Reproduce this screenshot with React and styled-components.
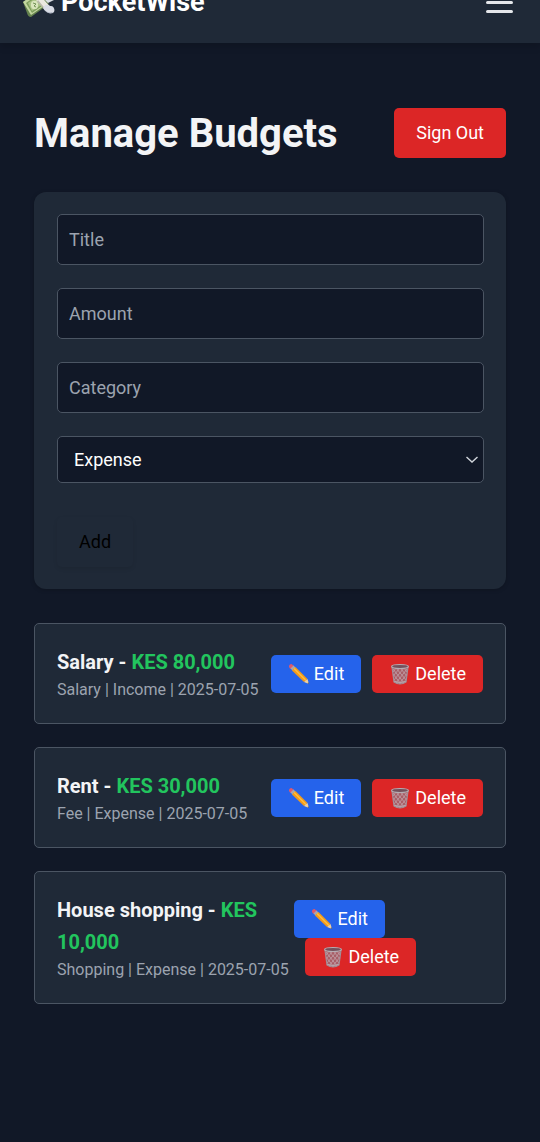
import React from "react";
import styled, { createGlobalStyle, css } from "styled-components";

const GlobalStyle = createGlobalStyle`
  *, *::before, *::after { box-sizing: border-box; }
  body {
    margin: 0;
    background: #111827;
    color: #f3f4f6;
    font-family: Roboto, "Liberation Sans", sans-serif;
    font-size: 18px;
    line-height: 27px;
  }
  button, input, select { font: inherit; }
  h1, h2, p, ul { margin: 0; padding: 0; }
`;

const Page = styled.div`
  min-height: 100vh;
  overflow: hidden;
`;

const Header = styled.header`
  display: flex;
  align-items: center;
  justify-content: space-between;
  margin-top: -39px;
  padding: 23px;
  background: #1f2937;
  box-shadow: 0 4px 7px rgba(0, 0, 0, 0.15);
`;

const Brand = styled.a`
  display: flex;
  align-items: center;
  gap: 6px;
  color: #fff;
  font-size: 27px;
  font-weight: 700;
  line-height: 36px;
  text-decoration: none;
`;

const MenuButton = styled.button`
  display: flex;
  padding: 0 4px 0 0;
  border: 0;
  background: none;
  color: #e5e7eb;
`;

const Main = styled.main`
  padding: 65px 34px 68px;
`;

const TitleRow = styled.div`
  display: flex;
  align-items: center;
  justify-content: space-between;
  margin-bottom: 34px;
`;

const Title = styled.h1`
  font-size: 40px;
  font-weight: 700;
  line-height: 45px;
`;

const tones = { red: "#dc2626", blue: "#2563eb" };

const Button = styled.button`
  border: 0;
  border-radius: 5px;
  padding: 11px 22px;
  line-height: 28px;
  white-space: nowrap;
  color: #fff;
  background: ${(p) => tones[p.$tone]};
`;

const Form = styled.form`
  display: flex;
  flex-direction: column;
  gap: 23px;
  margin-bottom: 34px;
  padding: 22px 22px 22px 23px;
  border-radius: 12px;
  background: #1f2937;
  box-shadow: 0 1px 4px rgba(0, 0, 0, 0.2);
`;

const fieldBox = css`
  width: 100%;
  border: 1px solid #4b5563;
  border-radius: 5px;
  background: #111827;
  color: #fff;
`;

const Field = styled.input`
  ${fieldBox}
  height: 51px;
  padding: 0 11px;
  &::placeholder { color: #9ca3af; opacity: 1; }
`;

const SelectBox = styled.div`
  display: grid;
  align-items: center;
  > * { grid-area: 1 / 1; }
  > svg { justify-self: end; margin-right: 5px; pointer-events: none; }
`;

const Select = styled.select`
  ${fieldBox}
  height: 47px;
  padding: 0 16px;
  appearance: none;
`;

const AddButton = styled.button`
  align-self: flex-start;
  margin-top: 11px;
  padding: 11px 22px;
  border: 0;
  border-radius: 5px;
  background: transparent;
  color: #000;
  line-height: 28px;
  box-shadow: 0 2px 4px rgba(0, 0, 0, 0.08);
`;

const List = styled.ul`
  display: flex;
  flex-direction: column;
  gap: 23px;
  list-style: none;
`;

const Item = styled.li`
  display: flex;
  align-items: center;
  justify-content: space-between;
  padding: 22px;
  border: 1px solid #4b5563;
  border-radius: 5px;
  background: #1f2937;
`;

const ItemTitle = styled.h2`
  font-size: 20px;
  font-weight: 700;
  line-height: 32px;
`;

const Amount = styled.span`
  color: #22c55e;
`;

const Meta = styled.p`
  color: #9ca3af;
  font-size: 16px;
  line-height: 23px;
  white-space: nowrap;
`;

const Actions = styled.div`
  display: flex;
  flex-wrap: wrap;
`;

const ActionButton = styled(Button)`
  display: flex;
  align-items: center;
  gap: 4px;
  padding: 5px 17px;
  & + & { margin-left: 11px; }
`;

const MoneyIcon = () => (
  <svg width="32" height="32" viewBox="0 0 32 32" aria-hidden="true">
    <path d="M15 8 22 2l9 7-4 2 4 3-8 4z" fill="#d9dde2" />
    <path d="M0 16 14 6l12 12-18 13q-3 0-4-4z" fill="#64824d" />
    <path d="M0 16 14 6l10 12L8 29z" fill="#c3d6a0" />
    <path d="m3 17 11-8 8 9-13 9z" fill="#7d9d5c" />
    <path d="m5 17 9-6 6 7-11 7z" fill="#a9c285" />
    <ellipse cx="11.500" cy="19" rx="3.600" ry="4.200" fill="#d9e5bd" />
    <path d="m10 17 3 1-2 2 2 1" fill="none" stroke="#75945a" />
    <path d="m9 10 5-4 16 18-5 2z" fill="#ebe9df" />
    <path d="m14 16 9 9 2 1-10-12z" fill="#b9b9aa" />
    <path d="M20 22c2-4 5-4 7-2 4-1 6 5 3 7-4 1-8-1-10-5z" fill="#d9dce5" />
    <path d="M21 23c2 3 5 4 9 3-2 3-7 1-9-3z" fill="#a9b0be" />
  </svg>
);

const MenuIcon = () => (
  <svg width="27" height="21" viewBox="0 0 27 21" stroke="currentColor" strokeWidth="3" strokeLinecap="round" aria-hidden="true">
    <path d="M1.5 1.5h24M1.5 10.5h24M1.5 19.5h24" />
  </svg>
);

const ChevronIcon = () => (
  <svg width="14" height="8" viewBox="0 0 14 8" fill="none" stroke="#d1d5db" strokeWidth="1.4" aria-hidden="true">
    <path d="m1.500 1 5.500 5 5.500-5" />
  </svg>
);

const PencilIcon = () => (
  <svg width="22" height="22" viewBox="0 0 22 22" aria-hidden="true">
    <path d="M1 3.500Q1 1 3.500 1L6 3 3 6Q1 5 1 3.500z" fill="#e0586c" />
    <path d="m2.500 5.500 3-3 2 2-3 3z" fill="#a9a6ac" />
    <path d="m4 7.500 3.500-3.500L19.500 16 16 19z" fill="#f39a1b" />
    <path d="m5.500 6 1-1L18.500 17l-1 1z" fill="#ffbd3e" />
    <path d="m16 19 3.500-3 1.500 5z" fill="#efcf9f" />
    <path d="m19.500 20.300 1-1 .5 1.700z" fill="#424954" />
  </svg>
);

const TrashIcon = () => (
  <svg width="22" height="22" viewBox="0 0 22 22" fill="none" aria-hidden="true">
    <path d="m3 4 2 15q6 4 12 0l2-15z" fill="#96717c" fillOpacity=".75" />
    <path d="m4 6 11 14M7 5l10 12M11 5l7 8M15 5l3 4M4 11l8 10M18 6 7 20M15 5 5 17M11 5l-7 8M7 5 4 9M18 11l-8 10" stroke="#c5aab3" strokeWidth=".7" />
    <path d="m3 4 2 15q6 4 12 0l2-15" stroke="#a18f98" strokeWidth="1.200" />
    <ellipse cx="11" cy="3.500" rx="8.400" ry="2" fill="#74515c" stroke="#b5aeb4" strokeWidth="1.200" />
    <path d="M5 18q6 3 12 0" stroke="#b5a5ac" strokeWidth="1.100" />
  </svg>
);

const budgets = [
  { title: "Salary", amount: "80,000", category: "Salary", type: "Income", date: "2025-07-05" },
  { title: "Rent", amount: "30,000", category: "Fee", type: "Expense", date: "2025-07-05" },
  { title: "House shopping", amount: "10,000", category: "Shopping", type: "Expense", date: "2025-07-05" },
];

const BudgetItem = ({ budget }) => (
  <Item>
    <div>
      <ItemTitle>
        {budget.title} - <Amount>KES {budget.amount}</Amount>
      </ItemTitle>
      <Meta>{`${budget.category} | ${budget.type} | ${budget.date}`}</Meta>
    </div>
    <Actions>
      <ActionButton type="button" $tone="blue"><PencilIcon />Edit</ActionButton>
      <ActionButton type="button" $tone="red"><TrashIcon />Delete</ActionButton>
    </Actions>
  </Item>
);

export default function App() {
  return (
    <>
      <GlobalStyle />
      <Page>
        <Header>
          <Brand href="#"><MoneyIcon />PocketWise</Brand>
          <MenuButton type="button" aria-label="Menu"><MenuIcon /></MenuButton>
        </Header>
        <Main>
          <TitleRow>
            <Title>Manage Budgets</Title>
            <Button type="button" $tone="red">Sign Out</Button>
          </TitleRow>
          <Form onSubmit={(e) => e.preventDefault()}>
            <Field type="text" placeholder="Title" aria-label="Title" />
            <Field type="text" inputMode="decimal" placeholder="Amount" aria-label="Amount" />
            <Field type="text" placeholder="Category" aria-label="Category" />
            <SelectBox>
              <Select aria-label="Type" defaultValue="Expense">
                <option>Expense</option>
                <option>Income</option>
              </Select>
              <ChevronIcon />
            </SelectBox>
            <AddButton type="submit">Add</AddButton>
          </Form>
          <List>
            {budgets.map((b) => <BudgetItem key={b.title} budget={b} />)}
          </List>
        </Main>
      </Page>
    </>
  );
}
